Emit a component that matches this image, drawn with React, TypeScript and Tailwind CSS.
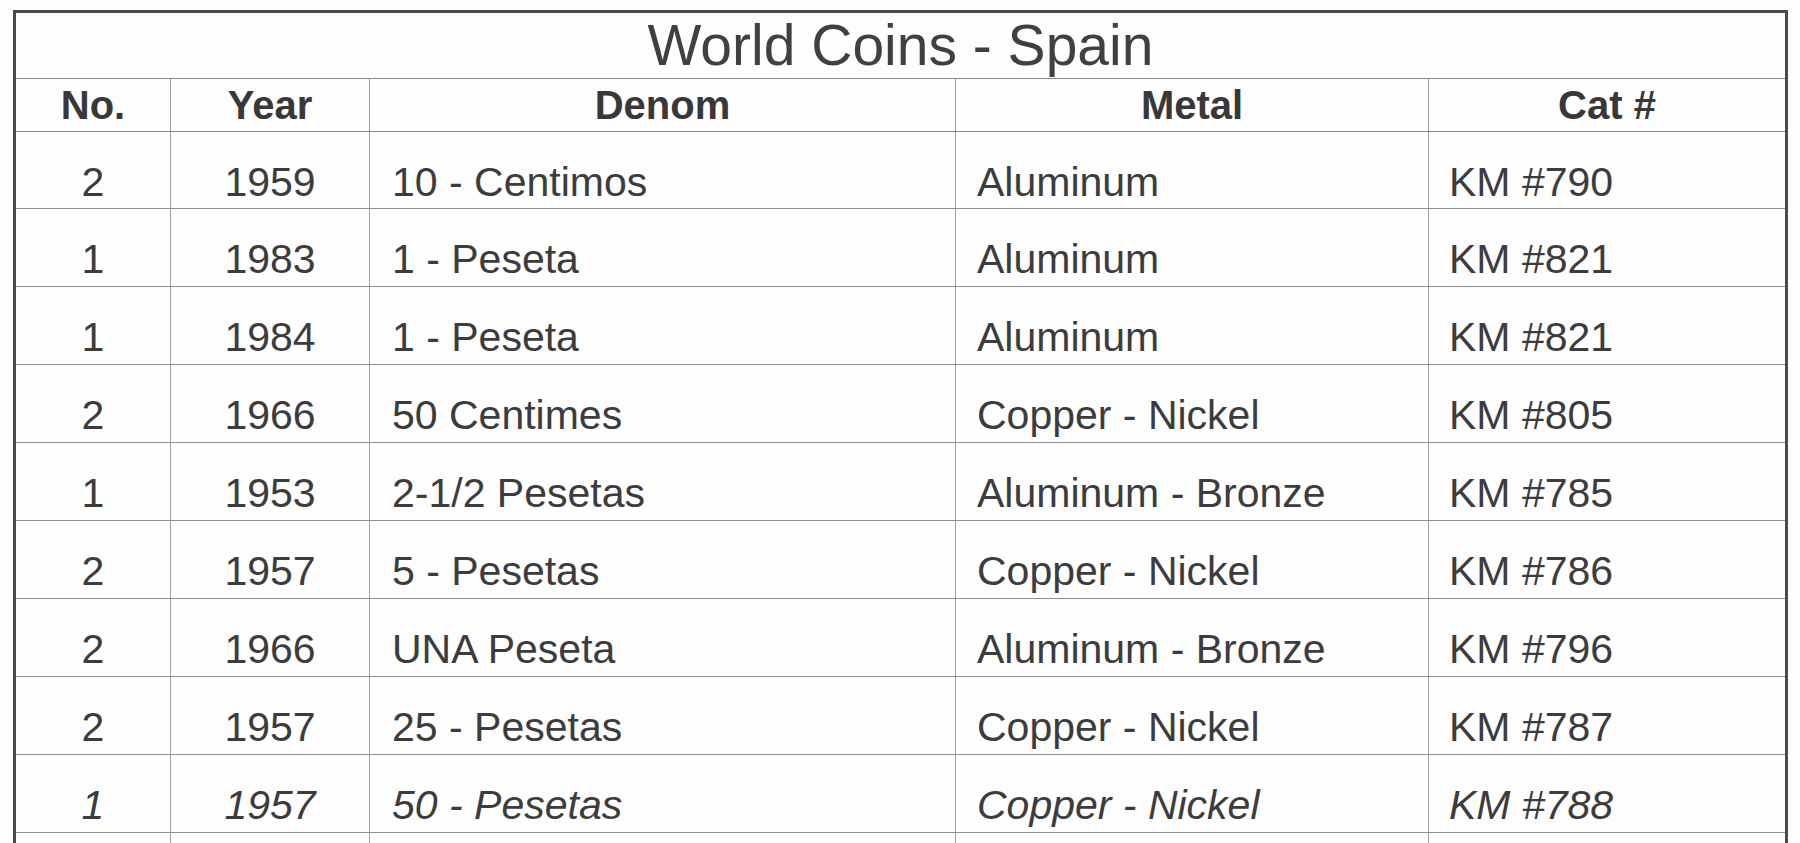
const COINS = [
  { no: "2", year: "1959", denom: "10 - Centimos", metal: "Aluminum", cat: "KM #790" },
  { no: "1", year: "1983", denom: "1 - Peseta", metal: "Aluminum", cat: "KM #821" },
  { no: "1", year: "1984", denom: "1 - Peseta", metal: "Aluminum", cat: "KM #821" },
  { no: "2", year: "1966", denom: "50 Centimes", metal: "Copper - Nickel", cat: "KM #805" },
  { no: "1", year: "1953", denom: "2-1/2 Pesetas", metal: "Aluminum - Bronze", cat: "KM #785" },
  { no: "2", year: "1957", denom: "5 - Pesetas", metal: "Copper - Nickel", cat: "KM #786" },
  { no: "2", year: "1966", denom: "UNA Peseta", metal: "Aluminum - Bronze", cat: "KM #796" },
  { no: "2", year: "1957", denom: "25 - Pesetas", metal: "Copper - Nickel", cat: "KM #787" },
  { no: "1", year: "1957", denom: "50 - Pesetas", metal: "Copper - Nickel", cat: "KM #788", slanted: true },
  { no: "", year: "", denom: "", metal: "", cat: "" },
];

const cols = "grid grid-cols-[155px_199px_586px_473px_1fr]";

const App: React.FC = () => {
  return (
    <div className="h-[843px] w-[1800px] overflow-hidden bg-[#fdfdfd] font-['Liberation_Sans'] text-[#3c3c3c]">
      <div className="ml-[13px] mt-[10px] w-[1775px] border-[3px] border-b-0 border-[#4a4a4a]">
        {/* Title */}
        <div className="h-[66px] border-b border-[#8a8a8a] pt-[4px] text-center text-[57px] leading-none text-[#404040]">
          World Coins - Spain
        </div>

        {/* Header */}
        <div className={`${cols} h-[53px] border-b border-[#8a8a8a] text-[40px] font-bold leading-none text-[#383838]`}>
          <div className="flex items-center justify-center border-r border-[#9a9a9a]">No.</div>
          <div className="flex items-center justify-center border-r border-[#9a9a9a]">Year</div>
          <div className="flex items-center justify-center border-r border-[#9a9a9a]">Denom</div>
          <div className="flex items-center justify-center border-r border-[#9a9a9a]">Metal</div>
          <div className="flex items-center justify-center">Cat #</div>
        </div>

        {/* Rows */}
        {COINS.map((coin, index) => (
          <div
            key={index}
            className={`${cols} ${index === 0 ? "h-[77px]" : "h-[78px]"} border-b border-[#8f8f8f] text-[41px] leading-none ${coin.slanted ? "italic" : ""}`}
          >
            <div className="border-r border-[#a0a0a0] pt-[30px] text-center">{coin.no}</div>
            <div className="border-r border-[#a0a0a0] pt-[30px] text-center">{coin.year}</div>
            <div className="border-r border-[#a0a0a0] pl-[22px] pt-[30px]">{coin.denom}</div>
            <div className="border-r border-[#a0a0a0] pl-[21px] pt-[30px]">{coin.metal}</div>
            <div className="pl-[20px] pt-[30px]">{coin.cat}</div>
          </div>
        ))}
      </div>
    </div>
  );
};

export default App;
